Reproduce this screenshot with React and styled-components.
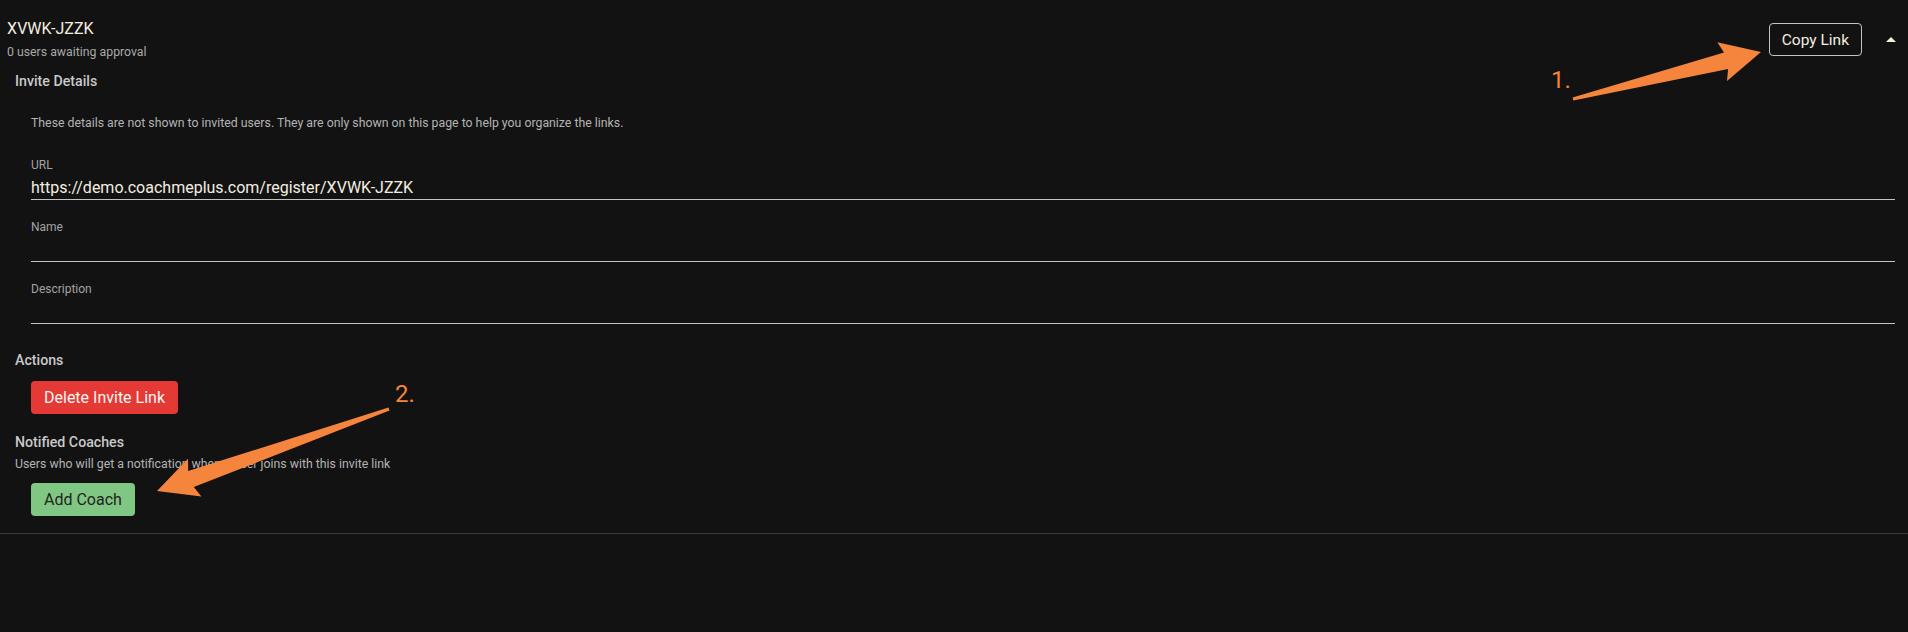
import React from "react";
import styled, { createGlobalStyle } from "styled-components";

const Global = createGlobalStyle`
  html, body {
    margin: 0;
    padding: 0;
    background: #121212;
    font-family: Roboto, "Noto Sans", sans-serif;
  }
`;

const Page = styled.div`
  position: relative;
  width: 100%;
  min-height: 632px;
  background: #121212;
`;

const Panel = styled.div`
  border-bottom: 1px solid #3b3b3b;
`;

const Header = styled.div`
  display: flex;
  align-items: center;
  justify-content: space-between;
  padding: 17px 5px 0 7px;
`;

const Title = styled.div`
  font-size: 16px;
  line-height: 24px;
  color: #f3eee0;
`;

const Subtitle = styled.div`
  margin-top: 1px;
  font-size: 12.3px;
  line-height: 20px;
  color: #a9a9a9;
`;

const HeaderActions = styled.div`
  display: flex;
  align-items: center;
  gap: 17px;
`;

const Button = styled.button`
  height: 33px;
  padding: 0 ${(p) => (p.$variant === "outline" ? 12 : 13)}px;
  border-radius: 4px;
  font-family: Roboto, sans-serif;
  font-size: ${(p) => (p.$variant === "outline" ? 15.5 : 16)}px;
  cursor: pointer;
  border: ${(p) => (p.$variant === "outline" ? "1px solid #c2c2c2" : "none")};
  background: ${(p) =>
    p.$variant === "danger" ? "#e53935" : p.$variant === "success" ? "#81c784" : "transparent"};
  color: ${(p) =>
    p.$variant === "danger" ? "#fdf6f2" : p.$variant === "success" ? "#1f241f" : "#f3eee0"};
`;

const Toggle = styled.span`
  display: flex;
  width: 24px;
  height: 24px;
  color: #f3eee0;
`;

const Body = styled.div`
  display: flex;
  flex-direction: column;
  padding: 9px 13px 17px 15px;
`;

const Section = styled.section`
  display: flex;
  flex-direction: column;
  margin-top: ${(p) => p.$top || 0}px;
`;

const SectionTitle = styled.div`
  font-size: 14.2px;
  line-height: 20px;
  font-weight: 500;
  color: #c9c9c9;
`;

const Indented = styled.div`
  display: flex;
  flex-direction: column;
  align-items: flex-start;
  padding-left: 16px;
  margin-top: ${(p) => p.$top || 0}px;
`;

const Helper = styled.div`
  font-size: 12.3px;
  line-height: 18px;
  color: #b4b4b4;
  margin-top: ${(p) => p.$top || 0}px;
`;

const Fields = styled.div`
  display: flex;
  flex-direction: column;
  gap: 20px;
  width: 100%;
  margin-top: 26px;
`;

const Field = styled.label`
  display: flex;
  flex-direction: column;
  border-bottom: 1px solid #c4c4c4;
`;

const FieldLabel = styled.span`
  font-size: 12px;
  line-height: 14px;
  color: #a3a3a3;
`;

const FieldInput = styled.input`
  margin-top: 3px;
  height: 24px;
  padding: 0;
  border: none;
  outline: none;
  background: transparent;
  font-family: Roboto, sans-serif;
  font-size: 16px;
  color: #f3eee0;
`;

const Overlay = styled.svg`
  position: absolute;
  top: 0;
  left: 0;
  pointer-events: none;
  overflow: visible;
`;

const Note = styled.text`
  font-family: Roboto, sans-serif;
  font-size: 24px;
  fill: #f5843c;
`;

// skitch style arrow: thin tail, wide neck, swept-back barbs
function arrowPath(tail, tip, headL = 40, headW = 20, neckW = 8.5, tailW = 1.5) {
  const dx = tip[0] - tail[0];
  const dy = tip[1] - tail[1];
  const len = Math.hypot(dx, dy);
  const ux = dx / len;
  const uy = dy / len;
  const nx = -uy;
  const ny = ux;
  const at = (s, t) => [tail[0] + ux * s + nx * t, tail[1] + uy * s + ny * t];
  const pts = [
    at(0, tailW),
    at(len - headL + 4, neckW),
    at(len - headL, headW),
    at(len, 0),
    at(len - headL, -headW),
    at(len - headL + 4, -neckW),
    at(0, -tailW),
  ];
  return pts.map((p) => p.map((v) => v.toFixed(1)).join(",")).join(" ");
}

function Annotations() {
  return (
    <Overlay width="1908" height="632" viewBox="0 0 1908 632">
      <polygon points={arrowPath([1573, 99], [1761, 52])} fill="#f5843c" />
      <Note x="1551" y="88">1.</Note>
      <polygon points={arrowPath([389, 409], [157, 491])} fill="#f5843c" />
      <Note x="395" y="402">2.</Note>
    </Overlay>
  );
}

export default function App() {
  return (
    <Page>
      <Global />
      <Panel>
        <Header>
          <div>
            <Title>XVWK-JZZK</Title>
            <Subtitle>0 users awaiting approval</Subtitle>
          </div>
          <HeaderActions>
            <Button $variant="outline">Copy Link</Button>
            <Toggle>
              <svg viewBox="0 0 24 24" width="24" height="24">
                <path d="M7 14l5-5 5 5z" fill="currentColor" />
              </svg>
            </Toggle>
          </HeaderActions>
        </Header>
        <Body>
          <Section>
            <SectionTitle>Invite Details</SectionTitle>
            <Indented $top={23}>
              <Helper>
                These details are not shown to invited users. They are only shown on this page to help you organize the links.
              </Helper>
              <Fields>
                <Field>
                  <FieldLabel>URL</FieldLabel>
                  <FieldInput readOnly value="https://demo.coachmeplus.com/register/XVWK-JZZK" />
                </Field>
                <Field>
                  <FieldLabel>Name</FieldLabel>
                  <FieldInput />
                </Field>
                <Field>
                  <FieldLabel>Description</FieldLabel>
                  <FieldInput />
                </Field>
              </Fields>
            </Indented>
          </Section>
          <Section $top={26}>
            <SectionTitle>Actions</SectionTitle>
            <Indented $top={11}>
              <Button $variant="danger">Delete Invite Link</Button>
            </Indented>
          </Section>
          <Section $top={18}>
            <SectionTitle>Notified Coaches</SectionTitle>
            <Helper $top={3}>Users who will get a notification when a user joins with this invite link</Helper>
            <Indented $top={10}>
              <Button $variant="success">Add Coach</Button>
            </Indented>
          </Section>
        </Body>
      </Panel>
      <Annotations />
    </Page>
  );
}
